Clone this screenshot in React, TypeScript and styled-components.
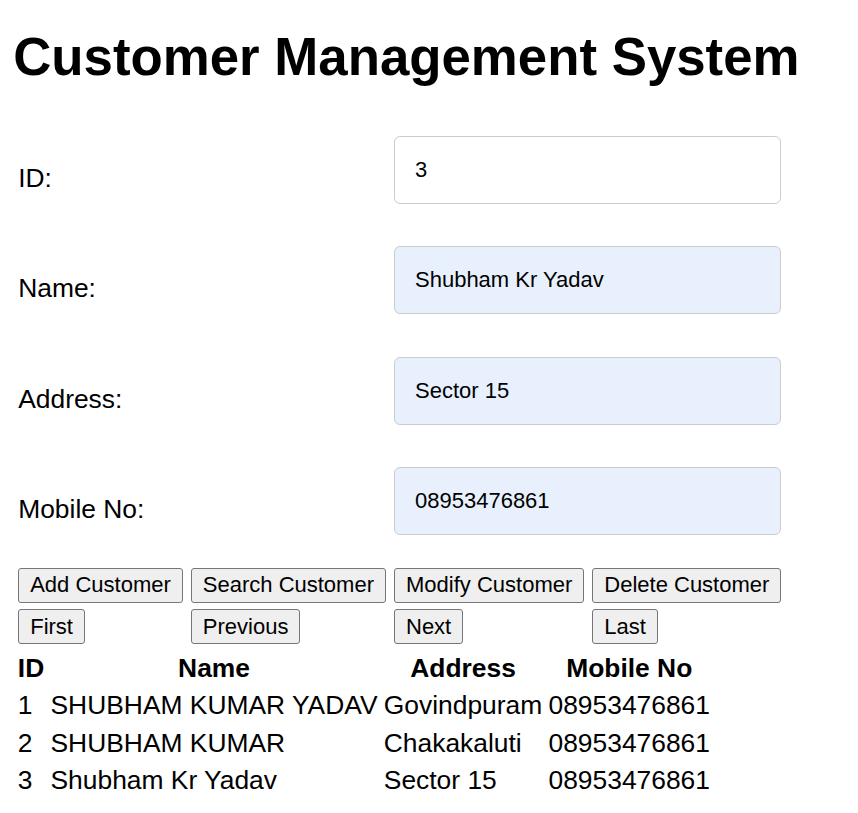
import React from "react";
import styled, { createGlobalStyle } from "styled-components";

const GlobalStyle = createGlobalStyle`
  html, body {
    margin: 0;
    padding: 0;
    background: #ffffff;
  }
  body {
    font-family: "Liberation Sans", Arial, sans-serif;
    font-size: 26.4px;
    color: #000000;
  }
`;

const Page = styled.div`
  padding: 0 13.2px 20px;
`;

const Title = styled.h1`
  font-size: 52.8px;
  font-weight: 700;
  line-height: normal;
  margin: 26px 0 35.4px;
`;

const FormTable = styled.table`
  border-collapse: separate;
  border-spacing: 2px 1.5px;
`;

const FieldCell = styled.td`
  padding: 3px;
  vertical-align: middle;
`;

const ButtonCell = styled.td`
  padding: 2.5px 3px 3.3px;
  vertical-align: middle;
`;

const Label = styled.label`
  font-size: 26.4px;
  line-height: normal;
`;

const TextInput = styled.input<{ $autofilled: boolean }>`
  display: block;
  box-sizing: border-box;
  width: 100%;
  height: 68px;
  margin: 9.5px 0 26px;
  padding: 20px 20px;
  border: 1px solid #cccccc;
  border-radius: 6px;
  background: ${(p) => (p.$autofilled ? "#e8f0fe" : "#ffffff")};
  font-family: "Liberation Sans", Arial, sans-serif;
  font-size: 22px;
  line-height: 25px;
  color: #000000;
  outline: none;
`;

const Button = styled.button`
  box-sizing: border-box;
  height: 34.7px;
  padding: 0 11px;
  border: 1px solid #767676;
  border-radius: 3px;
  background: #efefef;
  font-family: "Liberation Sans", Arial, sans-serif;
  font-size: 22px;
  color: #000000;
  cursor: pointer;
  white-space: nowrap;
`;

const DataTable = styled.table`
  border-collapse: separate;
  border-spacing: 3.3px 3.6px;
  font-size: 26.4px;
`;

const HeadCell = styled.th`
  padding: 1.65px;
  font-weight: 700;
  text-align: center;
  line-height: normal;
`;

const DataCell = styled.td`
  padding: 1.65px;
  text-align: left;
  line-height: normal;
`;

type Customer = { id: number; name: string; address: string; mobile: string };

const customers: Customer[] = [
  { id: 1, name: "SHUBHAM KUMAR YADAV", address: "Govindpuram", mobile: "08953476861" },
  { id: 2, name: "SHUBHAM KUMAR", address: "Chakakaluti", mobile: "08953476861" },
  { id: 3, name: "Shubham Kr Yadav", address: "Sector 15", mobile: "08953476861" },
];

const fields = [
  { key: "id", label: "ID:", value: "3", autofilled: false },
  { key: "name", label: "Name:", value: "Shubham Kr Yadav", autofilled: true },
  { key: "address", label: "Address:", value: "Sector 15", autofilled: true },
  { key: "mobile", label: "Mobile No:", value: "08953476861", autofilled: true },
];

export default function App() {
  return (
    <>
      <GlobalStyle />
      <Page>
        <Title>Customer Management System</Title>
        <FormTable>
          <tbody>
            {fields.map((f) => (
              <tr key={f.key}>
                <FieldCell colSpan={2}>
                  <Label htmlFor={f.key}>{f.label}</Label>
                </FieldCell>
                <FieldCell colSpan={2}>
                  <TextInput id={f.key} defaultValue={f.value} $autofilled={f.autofilled} />
                </FieldCell>
              </tr>
            ))}
            <tr>
              <ButtonCell><Button>Add Customer</Button></ButtonCell>
              <ButtonCell><Button>Search Customer</Button></ButtonCell>
              <ButtonCell><Button>Modify Customer</Button></ButtonCell>
              <ButtonCell><Button>Delete Customer</Button></ButtonCell>
            </tr>
            <tr>
              <ButtonCell><Button>First</Button></ButtonCell>
              <ButtonCell><Button>Previous</Button></ButtonCell>
              <ButtonCell><Button>Next</Button></ButtonCell>
              <ButtonCell><Button>Last</Button></ButtonCell>
            </tr>
          </tbody>
        </FormTable>
        <DataTable>
          <thead>
            <tr>
              <HeadCell>ID</HeadCell>
              <HeadCell>Name</HeadCell>
              <HeadCell>Address</HeadCell>
              <HeadCell>Mobile No</HeadCell>
            </tr>
          </thead>
          <tbody>
            {customers.map((c) => (
              <tr key={c.id}>
                <DataCell>{c.id}</DataCell>
                <DataCell>{c.name}</DataCell>
                <DataCell>{c.address}</DataCell>
                <DataCell>{c.mobile}</DataCell>
              </tr>
            ))}
          </tbody>
        </DataTable>
      </Page>
    </>
  );
}
